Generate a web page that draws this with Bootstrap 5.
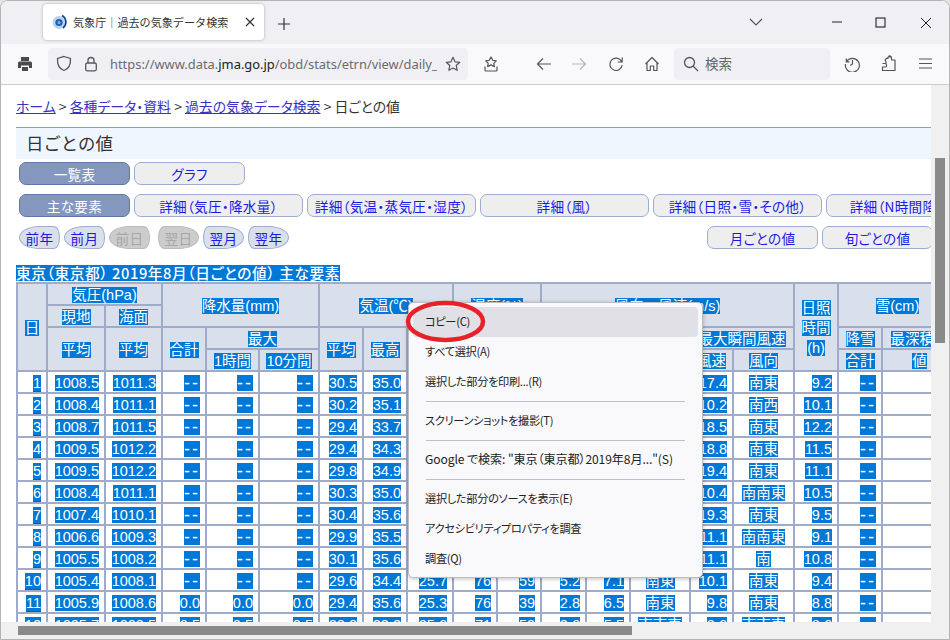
<!DOCTYPE html>
<html lang="ja">
<head>
<meta charset="utf-8">
<title>気象庁</title>
<link rel="stylesheet" href="https://cdn.jsdelivr.net/npm/bootstrap@5.3.0/dist/css/bootstrap.min.css">
<style>
html,body{height:640px;margin:0;overflow:hidden;background:#e4e4e4}
body{font-family:"Noto Sans CJK JP","Noto Sans",sans-serif;color:#222}
.win{width:950px;height:640px;position:relative;overflow:hidden;background:#fff;border:1px solid #b4b4b4;border-radius:8px 8px 0 0}
.tabbar{height:43px;background:#f0f0f4;flex:none}
.tabitem{width:221px;height:36px;margin:3px 0 0 42px;background:#fff;border-radius:4px;box-shadow:0 0 3px rgba(0,0,0,.3);padding:0 8px;font-size:11.1px;color:#333}
.tabtext{margin-left:6px;width:164px;white-space:nowrap;overflow:hidden}
.tabplus{margin-left:13px}
.chev{margin-left:458px}
.wctl{margin-left:68px}
.wctl2{margin-left:32px}
.wctl3{margin-left:34px}
.tools{height:41px;background:#f9f9fb;border-bottom:1px solid #ccc;flex:none;padding:4px 0 5px 16px}
.urlbar{width:420px;height:32px;background:#f0f0f4;border-radius:4px;margin-left:15px;padding-left:8px;font:12.9px "Noto Sans",sans-serif;color:#6b6b70;white-space:nowrap;overflow:hidden}
.urlclip{width:327px;overflow:hidden;margin-left:12px}
.urlclip b{font-weight:400;color:#222}
.searchbar{width:156px;height:32px;background:#f0f0f4;border-radius:4px;margin-left:14px;padding-left:9px;font-size:13.5px;color:#666}
.srchtxt{margin-left:6px}
.tl{flex:none;display:block}
.view{height:537px;flex:none}
.pane{width:931px;overflow:hidden;padding:0 0 0 15px;position:relative}
.vbar{width:18px;background:#f0f0f0;padding:73px 4px 0 4px;flex:none}
.vthumb{width:10px;height:185px;background:#8a8a8a}
.hbar{height:17px;background:#f0f0f0;padding:4px 0 0 17px;flex:none}
.hthumb{width:614px;height:9px;background:#8a8a8a}
.crumb{height:42px;font-size:13.9px;font-feature-settings:"palt";padding-top:11px;color:#333;line-height:20px}
.crumb a{color:#3a32c4}
.ttlband{width:917px;height:32px;background:#eff6ff;border-top:1px solid #86a0cc;font-size:17.4px;padding-left:10px;line-height:30px;color:#333}
.btnrow{padding-left:3px;gap:4px;white-space:nowrap}
.btnrow.r1{margin-top:3px;height:23px}
.btnrow.r2{margin-top:9px;height:23px;width:1000px}
.btnrow.r3{margin-top:9px;height:24px;width:917px}
.jbtn{--bs-btn-padding-y:0;--bs-btn-padding-x:0;flex:none;height:23px;line-height:20px;font-size:13.6px;letter-spacing:.3px;font-feature-settings:"palt";background:#eee;color:#1a1ae8;border:1px solid #9cadd0;border-radius:7px;width:111px}
.jbtn.on{background:#8497bf;border-color:#5f78a8;color:#fff}
.jbtn.w2{width:169px}
.pil{width:41px;background:#d9dfeb;border-radius:50% 6px 6px 50%/50%}
.pil.nx{border-radius:6px 50% 50% 6px/50%}
.pil.off{background:#ccc;border-color:#bbb;color:#a6a6a6}
.gap1{margin-left:4px}
.ttl2{margin-top:13px;height:19px;line-height:16px;font-size:14.67px;font-weight:700}
.sel{background:#0078d7;color:#fff;display:inline-block;line-height:16px;height:16px;vertical-align:middle;white-space:nowrap}
.ttl2 .sel{font-feature-settings:"palt";letter-spacing:.6px;font-weight:500}
.lnk{box-shadow:0 1px 0 #5a35b5}
.dsh{font-size:18px;letter-spacing:2px}
.wx.table{width:940px;max-width:none;table-layout:fixed;margin:0;border-collapse:collapse;font-family:"Liberation Sans","Noto Sans CJK JP",sans-serif;font-size:14.5px;font-weight:400;color:#fff}
.wx.table>:not(caption)>*>*{padding:0 5px 0 0;height:22px;line-height:20px;border:2px solid #a0abc9;background:#fff;box-shadow:none;text-align:right;vertical-align:middle;font-weight:400;color:#fff}
.wx.table>thead>tr>th{background:#d9dfeb;text-align:center;padding:0}
.wx.table>tbody>tr>td.ctr{text-align:center;padding:0}
.ctxmenu{position:absolute;left:407px;top:301px;width:295px;height:276px;background:#f9f9fb;border:1px solid #bdbdbd;border-radius:5px;box-shadow:0 1px 4px rgba(0,0,0,.25);padding:4px;font-size:11.2px;letter-spacing:-.3px;color:#222;font-feature-settings:"palt"}
.mi{height:30px;line-height:28px;padding-left:12px;border-radius:4px;white-space:nowrap}
.mi.hov{background:#e0e0e6}
.mi.gsrch{font-size:12.1px;letter-spacing:-.1px}
.msep{height:9px;padding:4px 13px}
.msep div{height:1px;background:#bfbfc4}
.ring{position:absolute;left:400px;top:295px;z-index:3}
</style>
</head>
<body>
<div class="win d-flex flex-column">
  <div class="tabbar d-flex align-items-start">
    <div class="tabitem d-flex align-items-center">
      <svg class="tl" width="16" height="16" viewBox="0 0 16 16"><circle cx="8" cy="8.500" r="6.500" fill="#b9d3ee"/><circle cx="8" cy="8.500" r="3.600" fill="#1f5fae"/><circle cx="8" cy="8.500" r="1.500" fill="#7fb2e6"/><path d="M11 1.500A7.500 7.500 0 0 1 12 14" fill="none" stroke="#0d3f86" stroke-width="1.600"/></svg>
      <span class="tabtext">気象庁｜過去の気象データ検索</span>
      <svg class="tl ms-3" width="12" height="12" viewBox="0 0 12 12"><path d="M2 2l8 8M10 2l-8 8" stroke="#333" stroke-width="1.200"/></svg>
    </div>
    <svg class="tl tabplus mt-3" width="14" height="14" viewBox="0 0 14 14"><path d="M7 1v12M1 7h12" stroke="#333" stroke-width="1.200"/></svg>
    <svg class="tl chev" style="margin-top:16px" width="14" height="10" viewBox="0 0 14 10"><path d="M1 2l6 6 6-6" fill="none" stroke="#555" stroke-width="1.200"/></svg>
    <svg class="tl wctl" style="margin-top:15px" width="12" height="12" viewBox="0 0 12 12"><path d="M1 6h10" stroke="#222" stroke-width="1.100"/></svg>
    <svg class="tl wctl2" style="margin-top:16px" width="11" height="11" viewBox="0 0 11 11"><rect x="1" y="1" width="9" height="9" fill="none" stroke="#222" stroke-width="1.100"/></svg>
    <svg class="tl wctl3" style="margin-top:16px" width="12" height="12" viewBox="0 0 12 12"><path d="M1 1l10 10M11 1L1 11" stroke="#222" stroke-width="1"/></svg>
  </div>
  <div class="tools d-flex align-items-center">
    <svg class="tl" width="16" height="16" viewBox="0 0 16 16"><path d="M4 1h8v4H4zM2.500 5.500h11a1.500 1.500 0 0 1 1.500 1.500v5h-3V9.500H4V12H1V7a1.500 1.500 0 0 1 1.500-1.500zM5 11h6v4H5z" fill="#4a4a4f"/></svg>
    <div class="urlbar d-flex align-items-center">
      <svg class="tl" width="16" height="17" viewBox="0 0 16 17"><path d="M8 1.500l6.500 2c.3 6-2 10.500-6.500 12-4.500-1.500-6.800-6-6.500-12z" fill="none" stroke="#55555a" stroke-width="1.300"/></svg>
      <svg class="tl ms-2 ps-1" width="18" height="16" viewBox="0 0 14 16"><path d="M4 7V4.500a3 3 0 0 1 6 0V7" fill="none" stroke="#55555a" stroke-width="1.300"/><rect x="1.700" y="7" width="10.600" height="7.800" rx="1.500" fill="none" stroke="#55555a" stroke-width="1.300"/></svg>
      <span class="urlclip">https://www.data.<b>jma.go.jp</b>/obd/stats/etrn/view/daily_s1.php</span>
      <svg class="tl ms-2" width="16" height="16" viewBox="0 0 16 16"><path d="M8 1.300l2 4.500 4.800.5-3.600 3.200 1 4.800L8 12l-4.200 2.300 1-4.800L1.200 6.300 6 5.800z" fill="none" stroke="#55555a" stroke-width="1.200" stroke-linejoin="round"/></svg>
    </div>
    <svg class="tl" style="margin-left:15px" width="16" height="16" viewBox="0 0 16 16"><path d="M8 1l1.800 3.300 3.500.5-2.500 2.500.6 3.300L8 8.900l-3.400 1.700.6-3.300-2.500-2.500 3.500-.5zM2 10.500V14a1 1 0 0 0 1 1h10a1 1 0 0 0 1-1v-3.500" fill="none" stroke="#55555a" stroke-width="1.200" stroke-linejoin="round"/></svg>
    <svg class="tl" style="margin-left:37px" width="16" height="14" viewBox="0 0 16 14"><path d="M7 1.500L1.500 7 7 12.500M1.500 7H15" fill="none" stroke="#55555a" stroke-width="1.200"/></svg>
    <svg class="tl" style="margin-left:19px" width="16" height="14" viewBox="0 0 16 14"><path d="M9 1.500L14.500 7 9 12.500M14.500 7H1" fill="none" stroke="#b9b9bd" stroke-width="1.200"/></svg>
    <svg class="tl" style="margin-left:21px" width="16" height="16" viewBox="0 0 16 16"><path d="M13.600 5.500A6.200 6.200 0 1 0 14.200 9M14.200 1.500V6H9.700" fill="none" stroke="#55555a" stroke-width="1.200"/></svg>
    <svg class="tl" style="margin-left:20px" width="16" height="16" viewBox="0 0 16 16"><path d="M1.500 8L8 1.500 14.500 8M3 6.700V14.500H6.300V10H9.700V14.500H13V6.700" fill="none" stroke="#55555a" stroke-width="1.200" stroke-linejoin="round"/></svg>
    <div class="searchbar d-flex align-items-center ">
      <svg class="tl" width="16" height="16" viewBox="0 0 16 16"><circle cx="6.500" cy="6.500" r="5" fill="none" stroke="#55555a" stroke-width="1.300"/><path d="M10 10l5 5" stroke="#55555a" stroke-width="1.300"/></svg>
      <span class="srchtxt">検索</span>
    </div>
    <svg class="tl" style="margin-left:14px" width="17" height="17" viewBox="0 0 17 17"><path d="M2.300 3.500V6.800H5.500M2.500 6.500A7 7 0 1 1 1.500 9M8.500 5v4l-2.300 1.500" fill="none" stroke="#55555a" stroke-width="1.200"/></svg>
    <svg class="tl" style="margin-left:20px" width="16" height="17" viewBox="0 0 16 17"><path d="M1.500 8.500H5V6.500C3.500 5.500 4.500 3 7 3.500V2H10.500L9 1M7.500 1.500c1-1 3-.5 3 1.500V5H14V15.500H1.500v-3.500H4.500C6 12 6 8.500 4 8.500" fill="none" stroke="#55555a" stroke-width="1.200" stroke-linejoin="round"/></svg>
    <svg class="tl" style="margin-left:22px" width="13" height="11" viewBox="0 0 13 11"><path d="M0 1h13M0 5.500h13M0 10h13" stroke="#55555a" stroke-width="1.200"/></svg>
  </div>
  <div class="view d-flex">
    <div class="pane">
      <div class="crumb"><a href="#">ホーム</a> &gt; <a href="#">各種データ・資料</a> &gt; <a href="#">過去の気象データ検索</a> &gt; 日ごとの値</div>
      <div class="ttlband">日ごとの値</div>
      <div class="btnrow r1 d-flex">
        <button class="btn jbtn on">一覧表</button><button class="btn jbtn">グラフ</button>
      </div>
      <div class="btnrow r2 d-flex">
        <button class="btn jbtn on">主な要素</button><button class="btn jbtn w2">詳細（気圧・降水量）</button><button class="btn jbtn w2">詳細（気温・蒸気圧・湿度）</button><button class="btn jbtn w2">詳細（風）</button><button class="btn jbtn w2">詳細（日照・雪・その他）</button><button class="btn jbtn w2">詳細（N時間降水量）</button>
      </div>
      <div class="btnrow r3 d-flex">
        <button class="btn jbtn pil">前年</button><button class="btn jbtn pil">前月</button><button class="btn jbtn pil off">前日</button><button class="btn jbtn pil nx off gap1">翌日</button><button class="btn jbtn pil nx">翌月</button><button class="btn jbtn pil nx">翌年</button>
        <button class="btn jbtn ms-auto">月ごとの値</button><button class="btn jbtn">旬ごとの値</button>
      </div>
      <div class="ttl2"><span class="sel">東京（東京都） 2019年8月（日ごとの値） 主な要素</span></div>
      <table class="wx table">
        <colgroup><col style="width:30px"><col style="width:58px"><col style="width:57px"><col style="width:44px"><col style="width:53px"><col style="width:60px"><col style="width:44px"><col style="width:44px"><col style="width:46px"><col style="width:44px"><col style="width:44px"><col style="width:45px"><col style="width:44px"><col style="width:60px"><col style="width:43px"><col style="width:61px"><col style="width:44px"><col style="width:44px"><col style="width:75px"></colgroup>
        <thead>
          <tr><th rowspan="4"><span class="sel">日</span></th><th colspan="2"><span class="sel">気圧(hPa)</span></th><th colspan="3" rowspan="2"><span class="sel">降水量(mm)</span></th><th colspan="3" rowspan="2"><span class="sel">気温(℃)</span></th><th colspan="2" rowspan="2"><span class="sel">湿度(%)</span></th><th colspan="5" rowspan="2"><span class="sel">風向・風速(m/s)</span></th><th rowspan="4"><span class="sel">日照</span><br><span class="sel">時間</span><br><span class="sel">(h)</span></th><th colspan="2" rowspan="2"><span class="sel">雪(cm)</span></th></tr>
          <tr><th><span class="sel">現地</span></th><th><span class="sel">海面</span></th></tr>
          <tr><th rowspan="2"><span class="sel">平均</span></th><th rowspan="2"><span class="sel">平均</span></th><th rowspan="2"><span class="sel">合計</span></th><th colspan="2"><span class="sel">最大</span></th><th rowspan="2"><span class="sel">平均</span></th><th rowspan="2"><span class="sel">最高</span></th><th rowspan="2"><span class="sel">最低</span></th><th rowspan="2"><span class="sel">平均</span></th><th rowspan="2"><span class="sel">最小</span></th><th rowspan="2"><span class="sel">平均風速</span></th><th colspan="2"><span class="sel">最大風速</span></th><th colspan="2"><span class="sel">最大瞬間風速</span></th><th><span class="sel">降雪</span></th><th><span class="sel">最深積雪</span></th></tr>
          <tr><th><span class="sel">1時間</span></th><th><span class="sel">10分間</span></th><th><span class="sel">風速</span></th><th><span class="sel">風向</span></th><th><span class="sel">風速</span></th><th><span class="sel">風向</span></th><th><span class="sel">合計</span></th><th><span class="sel">値</span></th></tr>
        </thead>
        <tbody>
          <tr><td><span class="sel lnk">1</span></td><td><span class="sel">1008.5</span></td><td><span class="sel">1011.3</span></td><td><span class="sel dsh">--</span></td><td><span class="sel dsh">--</span></td><td><span class="sel dsh">--</span></td><td><span class="sel">30.5</span></td><td><span class="sel">35.0</span></td><td></td><td></td><td></td><td></td><td></td><td></td><td><span class="sel">17.4</span></td><td class="ctr"><span class="sel">南東</span></td><td><span class="sel">9.2</span></td><td><span class="sel dsh">--</span></td><td></td></tr>
          <tr><td><span class="sel lnk">2</span></td><td><span class="sel">1008.4</span></td><td><span class="sel">1011.1</span></td><td><span class="sel dsh">--</span></td><td><span class="sel dsh">--</span></td><td><span class="sel dsh">--</span></td><td><span class="sel">30.2</span></td><td><span class="sel">35.1</span></td><td></td><td></td><td></td><td></td><td></td><td></td><td><span class="sel">10.2</span></td><td class="ctr"><span class="sel">南西</span></td><td><span class="sel">10.1</span></td><td><span class="sel dsh">--</span></td><td></td></tr>
          <tr><td><span class="sel lnk">3</span></td><td><span class="sel">1008.7</span></td><td><span class="sel">1011.5</span></td><td><span class="sel dsh">--</span></td><td><span class="sel dsh">--</span></td><td><span class="sel dsh">--</span></td><td><span class="sel">29.4</span></td><td><span class="sel">33.7</span></td><td></td><td></td><td></td><td></td><td></td><td></td><td><span class="sel">18.5</span></td><td class="ctr"><span class="sel">南東</span></td><td><span class="sel">12.2</span></td><td><span class="sel dsh">--</span></td><td></td></tr>
          <tr><td><span class="sel lnk">4</span></td><td><span class="sel">1009.5</span></td><td><span class="sel">1012.2</span></td><td><span class="sel dsh">--</span></td><td><span class="sel dsh">--</span></td><td><span class="sel dsh">--</span></td><td><span class="sel">29.4</span></td><td><span class="sel">34.3</span></td><td></td><td></td><td></td><td></td><td></td><td></td><td><span class="sel">18.8</span></td><td class="ctr"><span class="sel">南東</span></td><td><span class="sel">11.5</span></td><td><span class="sel dsh">--</span></td><td></td></tr>
          <tr><td><span class="sel lnk">5</span></td><td><span class="sel">1009.5</span></td><td><span class="sel">1012.2</span></td><td><span class="sel dsh">--</span></td><td><span class="sel dsh">--</span></td><td><span class="sel dsh">--</span></td><td><span class="sel">29.8</span></td><td><span class="sel">34.9</span></td><td></td><td></td><td></td><td></td><td></td><td></td><td><span class="sel">19.4</span></td><td class="ctr"><span class="sel">南東</span></td><td><span class="sel">11.1</span></td><td><span class="sel dsh">--</span></td><td></td></tr>
          <tr><td><span class="sel lnk">6</span></td><td><span class="sel">1008.4</span></td><td><span class="sel">1011.1</span></td><td><span class="sel dsh">--</span></td><td><span class="sel dsh">--</span></td><td><span class="sel dsh">--</span></td><td><span class="sel">30.3</span></td><td><span class="sel">35.0</span></td><td></td><td></td><td></td><td></td><td></td><td></td><td><span class="sel">10.4</span></td><td class="ctr"><span class="sel">南南東</span></td><td><span class="sel">10.5</span></td><td><span class="sel dsh">--</span></td><td></td></tr>
          <tr><td><span class="sel lnk">7</span></td><td><span class="sel">1007.4</span></td><td><span class="sel">1010.1</span></td><td><span class="sel dsh">--</span></td><td><span class="sel dsh">--</span></td><td><span class="sel dsh">--</span></td><td><span class="sel">30.4</span></td><td><span class="sel">35.6</span></td><td></td><td></td><td></td><td></td><td></td><td></td><td><span class="sel">19.3</span></td><td class="ctr"><span class="sel">南東</span></td><td><span class="sel">9.5</span></td><td><span class="sel dsh">--</span></td><td></td></tr>
          <tr><td><span class="sel lnk">8</span></td><td><span class="sel">1006.6</span></td><td><span class="sel">1009.3</span></td><td><span class="sel dsh">--</span></td><td><span class="sel dsh">--</span></td><td><span class="sel dsh">--</span></td><td><span class="sel">29.9</span></td><td><span class="sel">35.5</span></td><td></td><td></td><td></td><td></td><td></td><td></td><td><span class="sel">11.1</span></td><td class="ctr"><span class="sel">南南東</span></td><td><span class="sel">9.1</span></td><td><span class="sel dsh">--</span></td><td></td></tr>
          <tr><td><span class="sel lnk">9</span></td><td><span class="sel">1005.5</span></td><td><span class="sel">1008.2</span></td><td><span class="sel dsh">--</span></td><td><span class="sel dsh">--</span></td><td><span class="sel dsh">--</span></td><td><span class="sel">30.1</span></td><td><span class="sel">35.6</span></td><td></td><td></td><td></td><td></td><td></td><td></td><td><span class="sel">11.1</span></td><td class="ctr"><span class="sel">南</span></td><td><span class="sel">10.8</span></td><td><span class="sel dsh">--</span></td><td></td></tr>
          <tr><td><span class="sel lnk">10</span></td><td><span class="sel">1005.4</span></td><td><span class="sel">1008.1</span></td><td><span class="sel dsh">--</span></td><td><span class="sel dsh">--</span></td><td><span class="sel dsh">--</span></td><td><span class="sel">29.6</span></td><td><span class="sel">34.4</span></td><td><span class="sel">25.7</span></td><td><span class="sel">76</span></td><td><span class="sel">59</span></td><td><span class="sel">5.2</span></td><td><span class="sel">7.1</span></td><td class="ctr"><span class="sel">南東</span></td><td><span class="sel">10.1</span></td><td class="ctr"><span class="sel">南東</span></td><td><span class="sel">9.4</span></td><td><span class="sel dsh">--</span></td><td></td></tr>
          <tr><td><span class="sel lnk">11</span></td><td><span class="sel">1005.9</span></td><td><span class="sel">1008.6</span></td><td><span class="sel">0.0</span></td><td><span class="sel">0.0</span></td><td><span class="sel">0.0</span></td><td><span class="sel">29.4</span></td><td><span class="sel">35.6</span></td><td><span class="sel">25.3</span></td><td><span class="sel">76</span></td><td><span class="sel">39</span></td><td><span class="sel">2.8</span></td><td><span class="sel">6.5</span></td><td class="ctr"><span class="sel">南東</span></td><td><span class="sel">9.8</span></td><td class="ctr"><span class="sel">南東</span></td><td><span class="sel">8.8</span></td><td><span class="sel dsh">--</span></td><td></td></tr>
          <tr><td><span class="sel lnk">12</span></td><td><span class="sel">1005.7</span></td><td><span class="sel">1008.5</span></td><td><span class="sel">0.5</span></td><td><span class="sel">0.5</span></td><td><span class="sel">0.5</span></td><td><span class="sel">28.8</span></td><td><span class="sel">33.3</span></td><td><span class="sel">25.6</span></td><td><span class="sel">71</span></td><td><span class="sel">59</span></td><td><span class="sel">3.6</span></td><td><span class="sel">5.5</span></td><td class="ctr"><span class="sel">南南東</span></td><td><span class="sel">8.6</span></td><td class="ctr"><span class="sel">南南東</span></td><td><span class="sel">8.6</span></td><td><span class="sel dsh">--</span></td><td></td></tr>
        </tbody>
      </table>
    </div>
    <div class="vbar"><div class="vthumb"></div></div>
  </div>
  <div class="hbar"><div class="hthumb"></div></div>
  <div class="ctxmenu">
    <div class="mi hov">コピー(C)</div>
    <div class="mi">すべて選択(A)</div>
    <div class="mi">選択した部分を印刷...(R)</div>
    <div class="msep"><div></div></div>
    <div class="mi">スクリーンショットを撮影(T)</div>
    <div class="msep"><div></div></div>
    <div class="mi gsrch">Google で検索: "東京（東京都）2019年8月..."(S)</div>
    <div class="msep"><div></div></div>
    <div class="mi">選択した部分のソースを表示(E)</div>
    <div class="mi">アクセシビリティプロパティを調査</div>
    <div class="mi">調査(Q)</div>
  </div>
  <svg class="ring" width="90" height="50" viewBox="0 0 90 50"><ellipse cx="44.500" cy="25.500" rx="37.500" ry="18.500" fill="none" stroke="#e8202a" stroke-width="4.500"/></svg>
</div>
<script src="https://cdn.jsdelivr.net/npm/bootstrap@5.3.0/dist/js/bootstrap.bundle.min.js"></script>
</body>
</html>
